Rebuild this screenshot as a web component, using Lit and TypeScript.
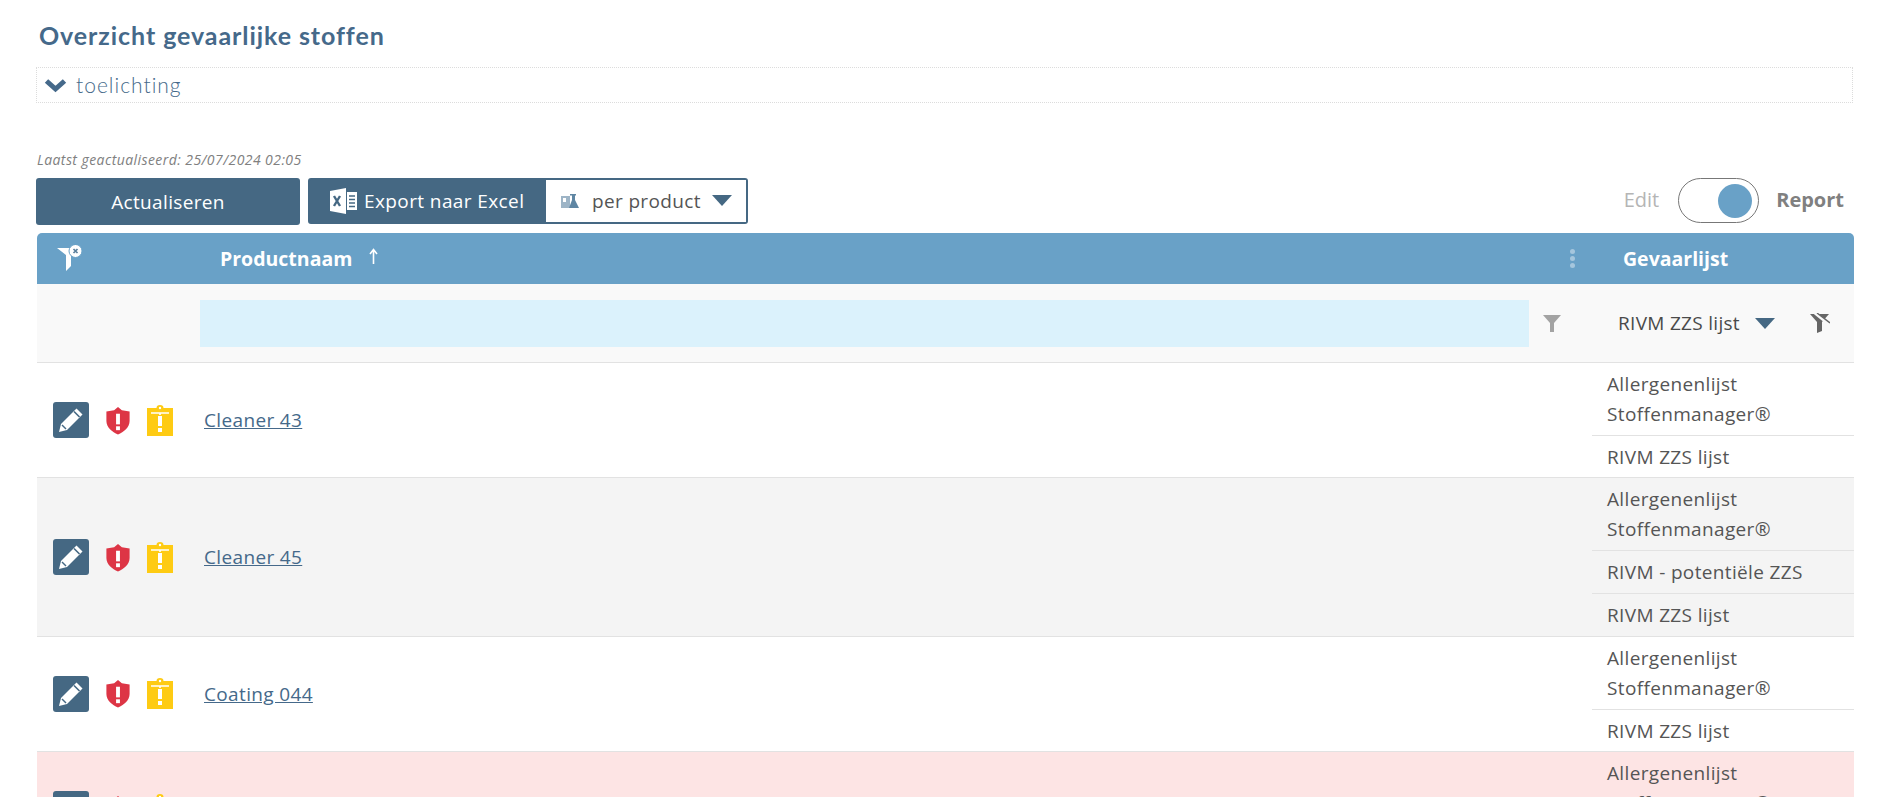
import { LitElement, html, css, svg } from "lit";
import { customElement } from "lit/decorators.js";

const ROWS = [
  { name: "Cleaner 43", lists: ["Allergenenlijst Stoffenmanager®", "RIVM ZZS lijst"], tone: "" },
  { name: "Cleaner 45", lists: ["Allergenenlijst Stoffenmanager®", "RIVM - potentiële ZZS", "RIVM ZZS lijst"], tone: "grey" },
  { name: "Coating 044", lists: ["Allergenenlijst Stoffenmanager®", "RIVM ZZS lijst"], tone: "" },
  { name: "Coating 045", lists: ["Allergenenlijst Stoffenmanager®", "RIVM ZZS lijst"], tone: "red" },
];

@customElement("app-root")
export class AppRoot extends LitElement {
  static styles = css`
    :host { display: block; height: 797px; overflow: hidden; background: #fff; font-family: "Open Sans", sans-serif; color: #555; }
    .page { padding: 0 31px 0 36px; }
    h1 { margin: 0; padding: 20px 0 0 3px; height: 47px; font: 700 25px/30px "Lato", sans-serif; color: #45698a; letter-spacing: .93px; }
    .toggle-box { height: 36px; width: 1817px; box-sizing: border-box; border: 1px dotted #dcdcdc; display: flex; align-items: center; gap: 9px; padding-left: 7px; font: 300 21px/1 "Lato", sans-serif; color: #45698a; letter-spacing: 1px; }
    .toggle-box span { margin-top: -2px; }
    .updated { margin-top: 47px; padding-left: 1px; height: 19px; font-size: 14px; line-height: 19px; font-style: italic; color: #808080; letter-spacing: .43px; }
    .tools { display: flex; align-items: flex-start; margin-top: 9px; height: 55px; }
    .btn { box-sizing: border-box; height: 47px; width: 264px; background: #456883; color: #fff; border-radius: 3px; display: flex; align-items: center; justify-content: center; font-size: 19px; letter-spacing: .35px; }
    .split { margin-left: 8px; height: 46px; width: 440px; box-sizing: border-box; border: 2px solid #456883; border-radius: 3px; display: flex; background: #456883; }
    .split .lbl { width: 236px; display: flex; align-items: center; gap: 7px; padding-left: 20px; color: #fff; font-size: 19px; letter-spacing: .4px; box-sizing: border-box; }
    .split .sel { flex: 1; background: #fff; display: flex; align-items: center; padding-left: 15px; gap: 13px; font-size: 19px; letter-spacing: .35px; color: #555; }
    .caret { width: 0; height: 0; border-left: 10px solid transparent; border-right: 10px solid transparent; border-top: 11px solid #456883; }
    .split .caret { margin: -2px 0 0 -2px; }
    .switch { margin-left: auto; margin-right: 10px; display: flex; align-items: center; height: 45px; font-size: 20px; }
    .switch .edit { color: #b5b5b5; margin-top: -2px; }
    .switch .report { color: #808080; font-weight: 700; margin-top: -2px; }
    .track { box-sizing: border-box; width: 81px; height: 45px; margin: 0 17px 0 19px; border: 1px solid #777; border-radius: 23px; display: flex; align-items: center; justify-content: flex-end; padding-right: 6px; }
    .knob { width: 34px; height: 34px; border-radius: 50%; background: #69a1c7; }
    .table { width: 1817px; margin-left: 1px; }
    .head { display: grid; grid-template-columns: 1555px 1fr; height: 51px; background: #69a1c7; border-radius: 5px 5px 0 0; color: #fff; font-weight: 700; font-size: 19.500px; align-items: center; }
    .head .left { display: flex; align-items: center; }
    .head .fx { width: 183px; padding-left: 20px; box-sizing: border-box; display: flex; }
    .head .arrow { margin: -5px 0 0 16px; display: flex; }
    .head .dots { margin-left: auto; margin-right: 17px; display: flex; flex-direction: column; gap: 2px; }
    .head .dots i { width: 5px; height: 5px; border-radius: 50%; background: #a5c6dd; }
    .head .gl { padding-left: 31px; }
    .filter { display: flex; height: 79px; box-sizing: border-box; background: #f9f9f9; border-bottom: 1px solid #e2e2e2; align-items: center; }
    .filter .inp { margin-left: 163px; width: 1329px; height: 47px; background: #dbf2fc; }
    .filter .f1 { margin-left: 14px; display: flex; }
    .filter .sel { margin-left: 57px; display: flex; align-items: center; font-size: 19px; letter-spacing: .3px; color: #4a4a4a; gap: 15px; }
    .filter .f2 { margin-left: 35px; display: flex; }
    .row { display: grid; grid-template-columns: 163px 1392px 1fr; border-bottom: 1px solid #e2e2e2; align-items: stretch; }
    .row.grey { background: #f4f4f4; }
    .row.red { background: #fde4e4; }
    .icons { display: flex; align-items: center; padding-left: 16px; gap: 16px; }
    .edit-ic { width: 36px; height: 36px; background: #456883; border-radius: 3px; display: flex; align-items: center; justify-content: center; }
    .icons svg { display: block; }
    .name { display: flex; align-items: center; padding-left: 4px; font-size: 19px; }
    .name a { color: #45698a; text-decoration: underline; letter-spacing: .35px; }
    .lists { font-size: 19px; line-height: 30px; letter-spacing: .35px; }
    .lists div { padding: 6px 14px 6px 15px; border-bottom: 1px solid #e2e2e2; box-sizing: border-box; }
    .lists div:last-child { border-bottom: 0; padding-bottom: 5.400px; }
  `;

  private pencil() {
    return svg`<svg width="28" height="28" viewBox="0 0 28 28"><path d="M19.500 2.500l6 6L10 24l-8 2 2-8z" fill="#fff"/><path d="M17 5.500l5.500 5.500" stroke="#456883" stroke-width="1.600"/><path d="M5 19l4 4" stroke="#456883" stroke-width="1.400"/></svg>`;
  }
  private shield() {
    return svg`<svg width="26" height="29" viewBox="0 0 26 30"><path d="M13 1l4 3.400 8 1.400v9.700C25 22 19 27 13 29.500 7 27 1 22 1 15.500V5.800l8-1.400z" fill="#dd3545"/><rect x="11" y="8" width="4" height="11" fill="#fff"/><rect x="11" y="21" width="4" height="4" fill="#fff"/></svg>`;
  }
  private clip() {
    return svg`<svg width="26" height="31" viewBox="0 0 26 31"><path d="M0 3h9.500a3.500 3 0 0 1 7 0H26v28H0z" fill="#fecb13"/><path d="M4 8h18M13 8v2" stroke="#fff" stroke-width="1.600"/><rect x="11" y="11" width="4" height="10" fill="#fff"/><rect x="11" y="23" width="4" height="4" fill="#fff"/><circle cx="13" cy="3" r="1.200" fill="#fff"/></svg>`;
  }

  render() {
    return html`<div class="page">
      <h1>Overzicht gevaarlijke stoffen</h1>
      <div class="toggle-box">
        <svg width="23" height="15" viewBox="0 0 23 15"><path d="M2.500 3l9 8 9-8" fill="none" stroke="#45698a" stroke-width="5"/></svg>
        <span>toelichting</span>
      </div>
      <div class="updated">Laatst geactualiseerd: 25/07/2024 02:05</div>
      <div class="tools">
        <div class="btn">Actualiseren</div>
        <div class="split">
          <div class="lbl">
            <svg width="27" height="26" viewBox="0 0 27 26"><path d="M0 3l16-3v26L0 23z" fill="#fff"/><path d="M17 4h10v18H17z" fill="#fff"/><path d="M19 8h6M19 11.500h6M19 15h6M19 18.500h6" stroke="#456883" stroke-width="1.500"/><path d="M4 8l6 10M10 8l-6 10" stroke="#456883" stroke-width="2.400"/></svg>
            <span>Export naar Excel</span>
          </div>
          <div class="sel">
            <svg width="18" height="16" viewBox="0 0 18 16"><path d="M0 3h9v12H0z" fill="#9db4c6"/><path d="M2 5h3v4H2z" fill="#fff"/><path d="M9 1h6v1.500h-1V7l4 8H8l3-8V2.500h-2z" fill="#5f86a3"/></svg>
            <span>per product</span>
            <div class="caret"></div>
          </div>
        </div>
        <div class="switch"><span class="edit">Edit</span><div class="track"><div class="knob"></div></div><span class="report">Report</span></div>
      </div>
      <div class="table">
        <div class="head">
          <div class="left">
            <div class="fx"><svg width="25" height="27" viewBox="0 0 25 27"><path d="M0 3h18l-4 7v11l-5 5V10z" fill="#fff"/><circle cx="18.500" cy="6" r="6.500" fill="#fff" stroke="#69a1c7" stroke-width="1"/><path d="M16.500 4l4 4M20.500 4l-4 4" stroke="#5a7f9c" stroke-width="1.700"/></svg></div>
            <span>Productnaam</span>
            <span class="arrow"><svg width="11" height="17" viewBox="0 0 11 17"><path d="M5.500 16V2M2 6l3.500-4.500L9 6" fill="none" stroke="#fff" stroke-width="1.600"/></svg></span>
            <span class="dots"><i></i><i></i><i></i></span>
          </div>
          <div class="gl">Gevaarlijst</div>
        </div>
        <div class="filter">
          <div class="inp"></div>
          <span class="f1"><svg width="18" height="18" viewBox="0 0 18 18"><path d="M0 1h18l-7 8v9H7V9z" fill="#a3a3a3"/></svg></span>
          <div class="sel"><span>RIVM ZZS lijst</span><div class="caret"></div></div>
          <span class="f2"><svg width="20" height="20" viewBox="0 0 20 20"><path d="M0 1h19l-7 8v9l-5 2V9z" fill="#666"/><path d="M5 0l15 12" stroke="#f9f9f9" stroke-width="3"/><path d="M7 0l13 10" stroke="#666" stroke-width="1.400"/></svg></span>
        </div>
        ${ROWS.map((r) => html`<div class="row ${r.tone}">
          <div class="icons">
            <div class="edit-ic">${this.pencil()}</div>
            ${this.shield()}${this.clip()}
          </div>
          <div class="name"><a>${r.name}</a></div>
          <div class="lists">${r.lists.map((l) => html`<div>${l}</div>`)}</div>
        </div>`)}
      </div>
    </div>`;
  }
}
